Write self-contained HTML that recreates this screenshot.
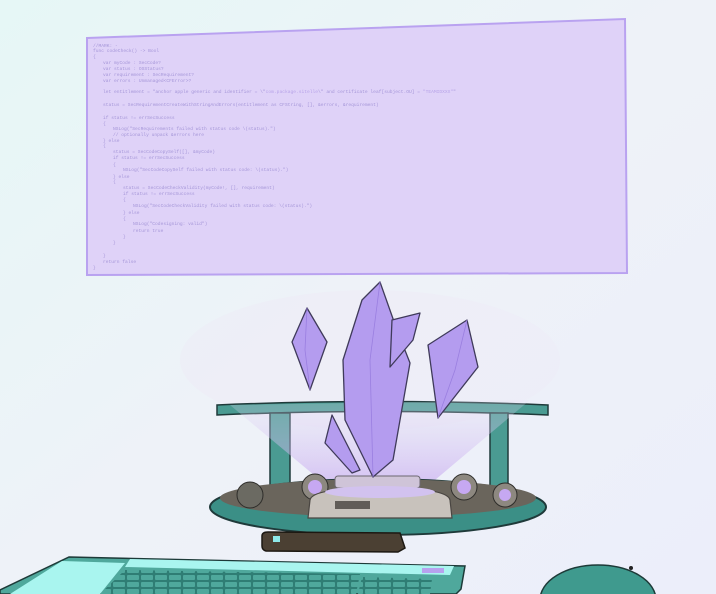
<!DOCTYPE html>
<html><head><meta charset="utf-8"><style>
html,body{margin:0;padding:0;width:716px;height:594px;overflow:hidden}
svg{display:block}
.c{font-family:"Liberation Mono",monospace;font-size:4.6px;fill:#a596d8}
</style></head><body>
<svg width="716" height="594" viewBox="0 0 716 594" xmlns="http://www.w3.org/2000/svg">
<defs>
<linearGradient id="bg" x1="0" y1="0" x2="1" y2="1">
<stop offset="0" stop-color="#e6f7f6"/><stop offset="0.5" stop-color="#eef2f8"/><stop offset="1" stop-color="#eceefa"/></linearGradient>
<linearGradient id="cone" x1="0" y1="0" x2="0" y2="1">
<stop offset="0" stop-color="#e4def4" stop-opacity="0.3"/><stop offset="1" stop-color="#c7a8f0" stop-opacity="0.8"/></linearGradient>
<pattern id="keys" width="14" height="7" patternUnits="userSpaceOnUse"><rect width="14" height="7" fill="#2f7d74"/><rect x="1" y="1" width="12" height="5" rx="1" fill="#4fa89c"/></pattern>
</defs>
<rect width="716" height="594" fill="url(#bg)"/>
<!-- code panel -->
<polygon points="87,38 625,19 627,273 87,275" fill="#dfd2f8" stroke="#b9a2f0" stroke-width="2"/>
<g class="c">
<text x="93" y="47">//MARK: -</text>
<text x="93" y="52">func codeCheck() -&gt; Bool</text>
<text x="93" y="58">{</text>
<text x="103" y="64">var myCode : SecCode?</text>
<text x="103" y="70">var status : OSStatus?</text>
<text x="103" y="76">var requirement : SecRequirement?</text>
<text x="103" y="82">var errors : Unmanaged&lt;CFError&gt;?</text>
<text x="103" y="93">let entitlement = "anchor apple generic and identifier = \"<tspan fill="#b7a3e8">com.package.sitelle</tspan>\" and certificate leaf[subject.OU] = <tspan fill="#b7a3e8">"TEAMIDXXX"</tspan>"</text>
<text x="103" y="106">status = SecRequirementCreateWithStringAndErrors(entitlement as CFString, [], &amp;errors, &amp;requirement)</text>
<text x="103" y="119">if status != errSecSuccess</text>
<text x="103" y="125">{</text>
<text x="113" y="130">NSLog("SecRequirements failed with status code \(status).")</text>
<text x="113" y="136">// optionally unpack &amp;errors here</text>
<text x="103" y="142">} else</text>
<text x="103" y="147">{</text>
<text x="113" y="153">status = SecCodeCopySelf([], &amp;myCode)</text>
<text x="113" y="159">if status != errSecSuccess</text>
<text x="113" y="166">{</text>
<text x="123" y="171">NSLog("SecCodeCopySelf failed with status code: \(status).")</text>
<text x="113" y="178">} else</text>
<text x="113" y="183">{</text>
<text x="123" y="189">status = SecCodeCheckValidity(myCode!, [], requirement)</text>
<text x="123" y="195">if status != errSecSuccess</text>
<text x="123" y="201">{</text>
<text x="133" y="207">NSLog("SecCodeCheckValidity failed with status code: \(status).")</text>
<text x="123" y="214">} else</text>
<text x="123" y="220">{</text>
<text x="133" y="225">NSLog("Codesigning: valid")</text>
<text x="133" y="232">return true</text>
<text x="123" y="238">}</text>
<text x="113" y="244">}</text>
<text x="103" y="257">}</text>
<text x="103" y="263">return false</text>
<text x="93" y="269">}</text>
</g>
<!-- glow -->
<ellipse cx="370" cy="360" rx="190" ry="70" fill="#efe8f6" opacity="0.35"/>
<!-- rail back -->
<path d="M217,405 Q380,398 548,405 L548,415 Q380,408 217,415 Z" fill="#4a9b92" stroke="#1f3a3a" stroke-width="1.5"/>
<rect x="270" y="413" width="20" height="85" fill="#4a9b92" stroke="#1f3a3a" stroke-width="1.5"/>
<rect x="490" y="413" width="18" height="85" fill="#4a9b92" stroke="#1f3a3a" stroke-width="1.5"/>
<!-- cone -->
<polygon points="230,405 530,400 435,480 320,480" fill="url(#cone)" opacity="0.75"/>
<!-- tray -->
<ellipse cx="378" cy="507" rx="168" ry="28" fill="#3b8f86" stroke="#1f3a3a" stroke-width="2"/>
<ellipse cx="378" cy="498" rx="158" ry="19" fill="#6a655c"/>
<circle cx="250" cy="495" r="13" fill="#6b6a62" stroke="#2e2d2a"/>
<circle cx="315" cy="487" r="13" fill="#8d8880" stroke="#2e2d2a"/>
<circle cx="315" cy="487" r="7" fill="#c6a8f2"/>
<circle cx="464" cy="487" r="13" fill="#8d8880" stroke="#2e2d2a"/>
<circle cx="464" cy="487" r="7" fill="#c6a8f2"/>
<circle cx="505" cy="495" r="12" fill="#8d8880" stroke="#2e2d2a"/>
<circle cx="505" cy="495" r="6" fill="#c6a8f2"/>
<rect x="335" y="476" width="85" height="12" rx="3" fill="#cfc4d8" stroke="#6c6870"/>
<path d="M310,500 Q312,488 380,488 Q448,488 450,500 L452,518 L308,518 Z" fill="#c8c2bc" stroke="#4a4642" stroke-width="1.2"/>
<ellipse cx="380" cy="492" rx="55" ry="6" fill="#d2c2ef"/>
<rect x="335" y="501" width="35" height="8" fill="#615c58"/>
<!-- front slab -->
<path d="M262,536 Q262,532 268,532 L400,533 L405,548 L398,552 L266,551 Q262,550 262,546 Z" fill="#4b4033" stroke="#1c1812" stroke-width="1.5"/>
<rect x="273" y="536" width="7" height="6" fill="#8ee9ea"/>
<!-- crystals -->
<g fill="#b49cef" stroke="#3f3a5a" stroke-width="1.3" stroke-linejoin="round">
<polygon points="332,415 360,470 352,473 325,443"/>
<polygon points="380,282 397,330 410,363 393,460 373,477 345,420 343,360 362,300"/>
<polygon points="307,308 327,342 310,390 292,342"/>
<polygon points="392,320 420,313 413,340 390,367"/>
<polygon points="467,320 478,367 438,418 428,345"/>
</g>
<g fill="none" stroke="#9a7fe0" stroke-width="0.8">
<path d="M380,282 L370,360 L373,477"/><path d="M307,308 L305,350 L310,390"/><path d="M467,320 L455,370 L438,418"/>
</g>
<!-- keyboard -->
<polygon points="69,557 465,566 461,589 456,594 0,594 0,590" fill="#4fa89c" stroke="#1d3a38" stroke-width="1.5"/>
<polygon points="130,559 454,566 450,575 125,567" fill="#a9f5ef"/>
<polygon points="62,561 125,563 100,594 10,594" fill="#a9f5ef"/>
<rect x="422" y="568" width="22" height="5" fill="#b7a2ee"/>
<polygon points="125,570 360,574 356,594 100,594" fill="url(#keys)"/>
<polygon points="362,577 432,579 430,594 358,594" fill="url(#keys)"/>
<!-- mouse -->
<ellipse cx="598" cy="600" rx="58" ry="35" fill="#3f9a8e" stroke="#1d3a38" stroke-width="1.5"/>
<circle cx="631" cy="568" r="2" fill="#222"/>
</svg>
</body></html>
